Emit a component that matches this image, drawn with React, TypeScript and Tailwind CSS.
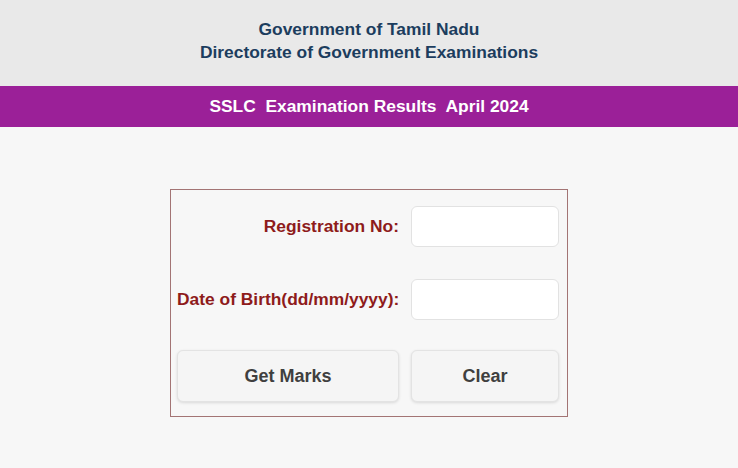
import { useState } from 'react'

export default function App() {
  const [regNo, setRegNo] = useState('')
  const [dob, setDob] = useState('')

  return (
    <div className="min-h-[468px] bg-[#f7f7f7] font-['Liberation_Sans',Arial,sans-serif]">
      <div className="h-[86px] bg-[#e9e9e9] flex flex-col items-center justify-center pb-[4px] text-[17.4px] font-bold leading-[23px] text-[#1c3d5e]">
        <div>Government of Tamil Nadu</div>
        <div>Directorate of Government Examinations</div>
      </div>

      <div className="h-[41px] bg-[#9b2098] flex items-center justify-center text-white text-[17.4px] font-bold whitespace-pre">
        SSLC  Examination Results  April 2024
      </div>

      <div className="flex justify-center pt-[62px]">
        <div className="w-[398px] border border-[#a37474] pl-[6px] pr-[8px] pt-[16px] pb-[14px]">
          <div className="grid grid-cols-[222px_148px] gap-x-[12px] items-center text-[17.4px] font-bold">
            <label className="text-right text-[#8e1b1b]">Registration No:</label>
            <input
              value={regNo}
              onChange={e => setRegNo(e.target.value)}
              className="h-[41px] w-full rounded-md border border-[#e2e2e2] bg-white px-2 outline-none"
            />
            <div className="h-[32px] col-span-2" />
            <label className="text-right text-[#8e1b1b] whitespace-nowrap">Date of Birth(dd/mm/yyyy):</label>
            <input
              value={dob}
              onChange={e => setDob(e.target.value)}
              className="h-[41px] w-full rounded-md border border-[#e2e2e2] bg-white px-2 outline-none"
            />
            <div className="h-[30px] col-span-2" />
            <button className="h-[52px] rounded-md border border-[#e3e3e3] bg-[#f5f5f5] text-[18px] text-[#3f3f3f] shadow-[0_1px_3px_rgba(0,0,0,0.12)]">
              Get Marks
            </button>
            <button
              onClick={() => { setRegNo(''); setDob('') }}
              className="h-[52px] rounded-md border border-[#e3e3e3] bg-[#f5f5f5] text-[18px] text-[#3f3f3f] shadow-[0_1px_3px_rgba(0,0,0,0.12)]"
            >
              Clear
            </button>
          </div>
        </div>
      </div>
    </div>
  )
}
